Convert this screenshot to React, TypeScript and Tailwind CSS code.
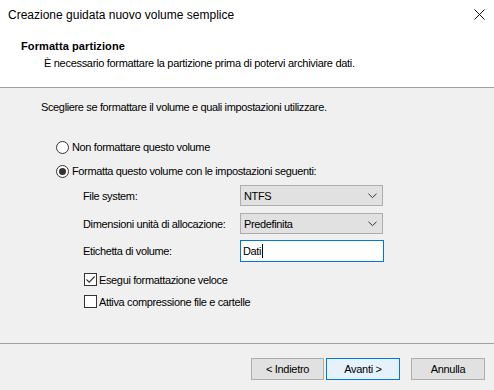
import React from "react";

const Chevron = () => (
  <svg width="9" height="6" viewBox="0 0 9 6" className="shrink-0">
    <path d="M0.5 0.8 L4.5 4.6 L8.5 0.8" fill="none" stroke="#333" strokeWidth="1" />
  </svg>
);

const Radio = ({ checked }: { checked?: boolean }) => (
  <span className="w-[13px] h-[13px] rounded-full border border-[#333] bg-white flex items-center justify-center shrink-0">
    {checked && <span className="w-[7px] h-[7px] rounded-full bg-[#333]" />}
  </span>
);

const Check = ({ checked }: { checked?: boolean }) => (
  <span className="w-[13px] h-[13px] border border-[#333] bg-white flex items-center justify-center shrink-0">
    {checked && (
      <svg width="11" height="11" viewBox="0 0 11 11">
        <path d="M1.5 5.5 L4.2 8.2 L9.6 2.5" fill="none" stroke="#333" strokeWidth="1.1" />
      </svg>
    )}
  </span>
);

const Select = ({ value }: { value: string }) => (
  <div className="w-[143px] h-[21px] border border-[#adadad] bg-[#e1e1e1] flex items-center justify-between pl-[3px] pr-[5px]">
    <span>{value}</span>
    <Chevron />
  </div>
);

export default function App() {
  return (
    <div
      className="w-[494px] h-[390px] bg-[#f0f0f0] text-black flex flex-col overflow-hidden"
      style={{ fontFamily: '"Liberation Sans", Arial, sans-serif' }}
    >
      <div className="bg-white h-[88px] border-b border-[#a0a0a0] shrink-0 flex flex-col">
        <div className="h-[29px] flex items-center justify-between pl-[8px] pr-[9px] text-[12px] text-black">
          <span>Creazione guidata nuovo volume semplice</span>
          <svg width="11" height="11" viewBox="0 0 11 11">
            <path d="M0.5 0.5 L10.5 10.5 M10.5 0.5 L0.5 10.5" stroke="#111" strokeWidth="1" />
          </svg>
        </div>
        <div className="pl-[21px] pt-[10px] text-[11px] font-bold leading-[14px] tracking-[0.1px]">Formatta partizione</div>
        <div className="pl-[44px] pt-[3px] text-[11px] leading-[14px] tracking-[-0.3px]">
          È necessario formattare la partizione prima di potervi archiviare dati.
        </div>
      </div>
      <div className="flex-1 text-[11px] leading-[14px] tracking-[-0.36px]">
        <div className="pl-[41px] pt-[12px]">Scegliere se formattare il volume e quali impostazioni utilizzare.</div>
        <div className="pl-[56px] pt-[26px] flex flex-col gap-[10px]">
          <div className="flex items-center gap-[3px] h-[14px]">
            <Radio />
            <span>Non formattare questo volume</span>
          </div>
          <div className="flex items-center gap-[3px] h-[14px]">
            <Radio checked />
            <span>Formatta questo volume con le impostazioni seguenti:</span>
          </div>
        </div>
        <div className="pl-[83px] pt-[7px] flex flex-col">
          <div className="flex items-center">
            <span className="w-[157px]">File system:</span>
            <Select value="NTFS" />
          </div>
          <div className="flex items-center mt-[7px]">
            <span className="w-[157px]">Dimensioni unità di allocazione:</span>
            <Select value="Predefinita" />
          </div>
          <div className="flex items-center mt-[6px]">
            <span className="w-[157px]">Etichetta di volume:</span>
            <div className="w-[144px] h-[22px] border border-[#0078d7] bg-white flex items-center pl-[2px]">
              <span>Dati</span>
              <span className="w-px h-[14px] bg-black ml-[1px]" />
            </div>
          </div>
        </div>
        <div className="pl-[84px] pt-[11px] flex flex-col gap-[9px]">
          <div className="flex items-center gap-[2px] h-[13px]">
            <Check checked />
            <span>Esegui formattazione veloce</span>
          </div>
          <div className="flex items-center gap-[2px] h-[13px]">
            <Check />
            <span>Attiva compressione file e cartelle</span>
          </div>
        </div>
      </div>
      <div className="h-[47px] border-t border-[#a0a0a0] shrink-0 flex items-start pt-[14px] text-[11px] tracking-[-0.3px]">
        <div className="flex ml-[251px]">
          <button className="w-[73px] h-[22px] border border-[#adadad] bg-[#e1e1e1] flex items-center justify-center">&lt; Indietro</button>
          <button className="w-[74px] h-[22px] ml-[2px] border border-[#0078d7] bg-[#e5f1fb] flex items-center justify-center">Avanti &gt;</button>
          <button className="w-[74px] h-[22px] ml-[11px] border border-[#adadad] bg-[#e1e1e1] flex items-center justify-center">Annulla</button>
        </div>
      </div>
    </div>
  );
}
